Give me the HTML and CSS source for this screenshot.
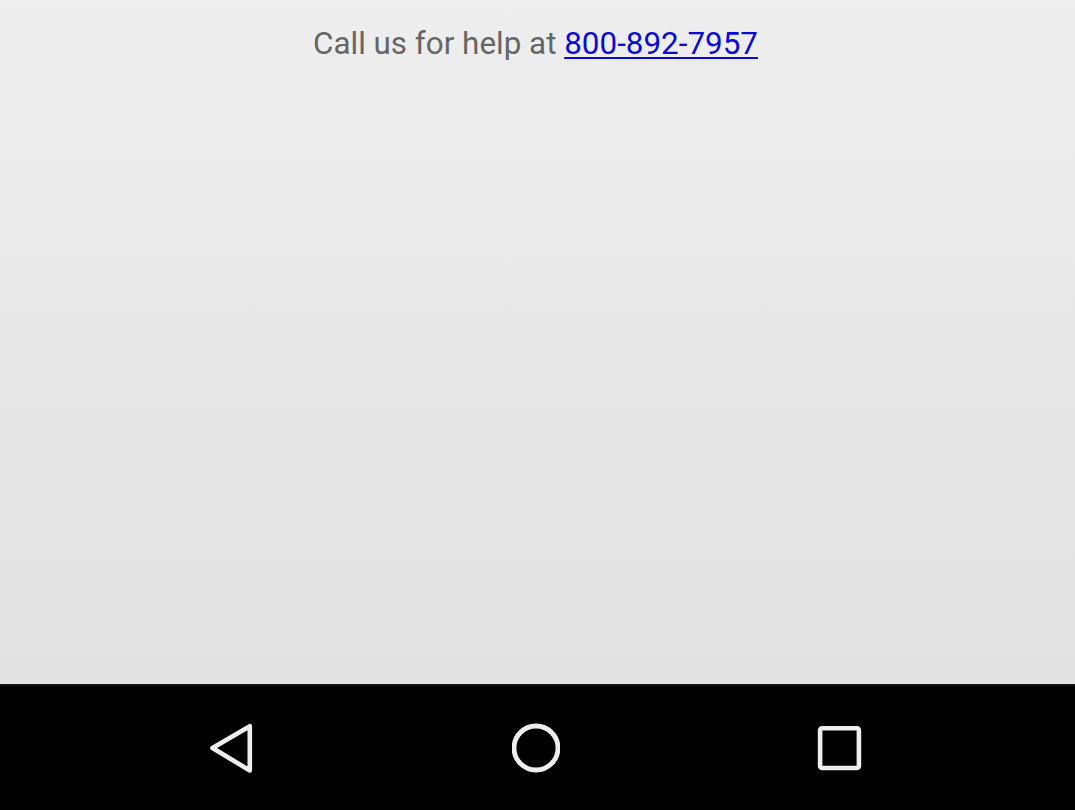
FILE: index.html
```html
<!DOCTYPE html>
<html lang="en">
<head>
<meta charset="utf-8">
<title>Help</title>
<link rel="stylesheet" href="styles.css">
</head>
<body>
<main class="screen">
  <p class="help">Call us for help at <a class="phone" href="tel:800-892-7957">800-892-7957</a></p>
</main>
<nav class="navbar">
  <button class="nav-btn" aria-label="Back">
    <svg width="48" height="56" viewBox="0 0 48 56"><path d="M4.5 28 L41.8 6.2 L41.8 50.5 Z" fill="none" stroke="#eeeeee" stroke-width="4.6" stroke-linejoin="round"/></svg>
  </button>
  <button class="nav-btn" aria-label="Home">
    <svg width="48" height="56" viewBox="0 0 48 56"><circle cx="24" cy="28" r="22" fill="none" stroke="#eeeeee" stroke-width="4.8"/></svg>
  </button>
  <button class="nav-btn" aria-label="Recents">
    <svg width="48" height="56" viewBox="0 0 48 56"><rect x="4.1" y="8.3" width="38.8" height="39.7" rx="2" fill="none" stroke="#eeeeee" stroke-width="4.6"/></svg>
  </button>
</nav>
</body>
</html>
```
FILE: styles.css
```css
html, body {
  margin: 0;
  padding: 0;
  background: #000;
}
body {
  width: 1075px;
  height: 810px;
  overflow: hidden;
  font-family: Roboto, "Liberation Sans", sans-serif;
}
.screen {
  height: 684px;
  background: linear-gradient(180deg, #eeeeee 0%, #e2e2e2 100%);
  box-sizing: border-box;
  padding-top: 25px;
  padding-right: 4px;
}
.help {
  margin: 0;
  text-align: center;
  font-size: 31.4px;
  color: #666666;
}
.phone {
  color: #0a0ad6;
  text-decoration: underline;
  text-underline-offset: 3px;
  text-decoration-thickness: 2px;
}
.navbar {
  height: 126px;
  background: #000;
  border-top: 2px solid #141414;
  box-sizing: border-box;
  display: flex;
  justify-content: center;
  align-items: center;
  gap: 256px;
  padding-right: 4px;
}
.nav-btn {
  background: none;
  border: 0;
  padding: 0;
  width: 48px;
  height: 56px;
  display: flex;
}
```
